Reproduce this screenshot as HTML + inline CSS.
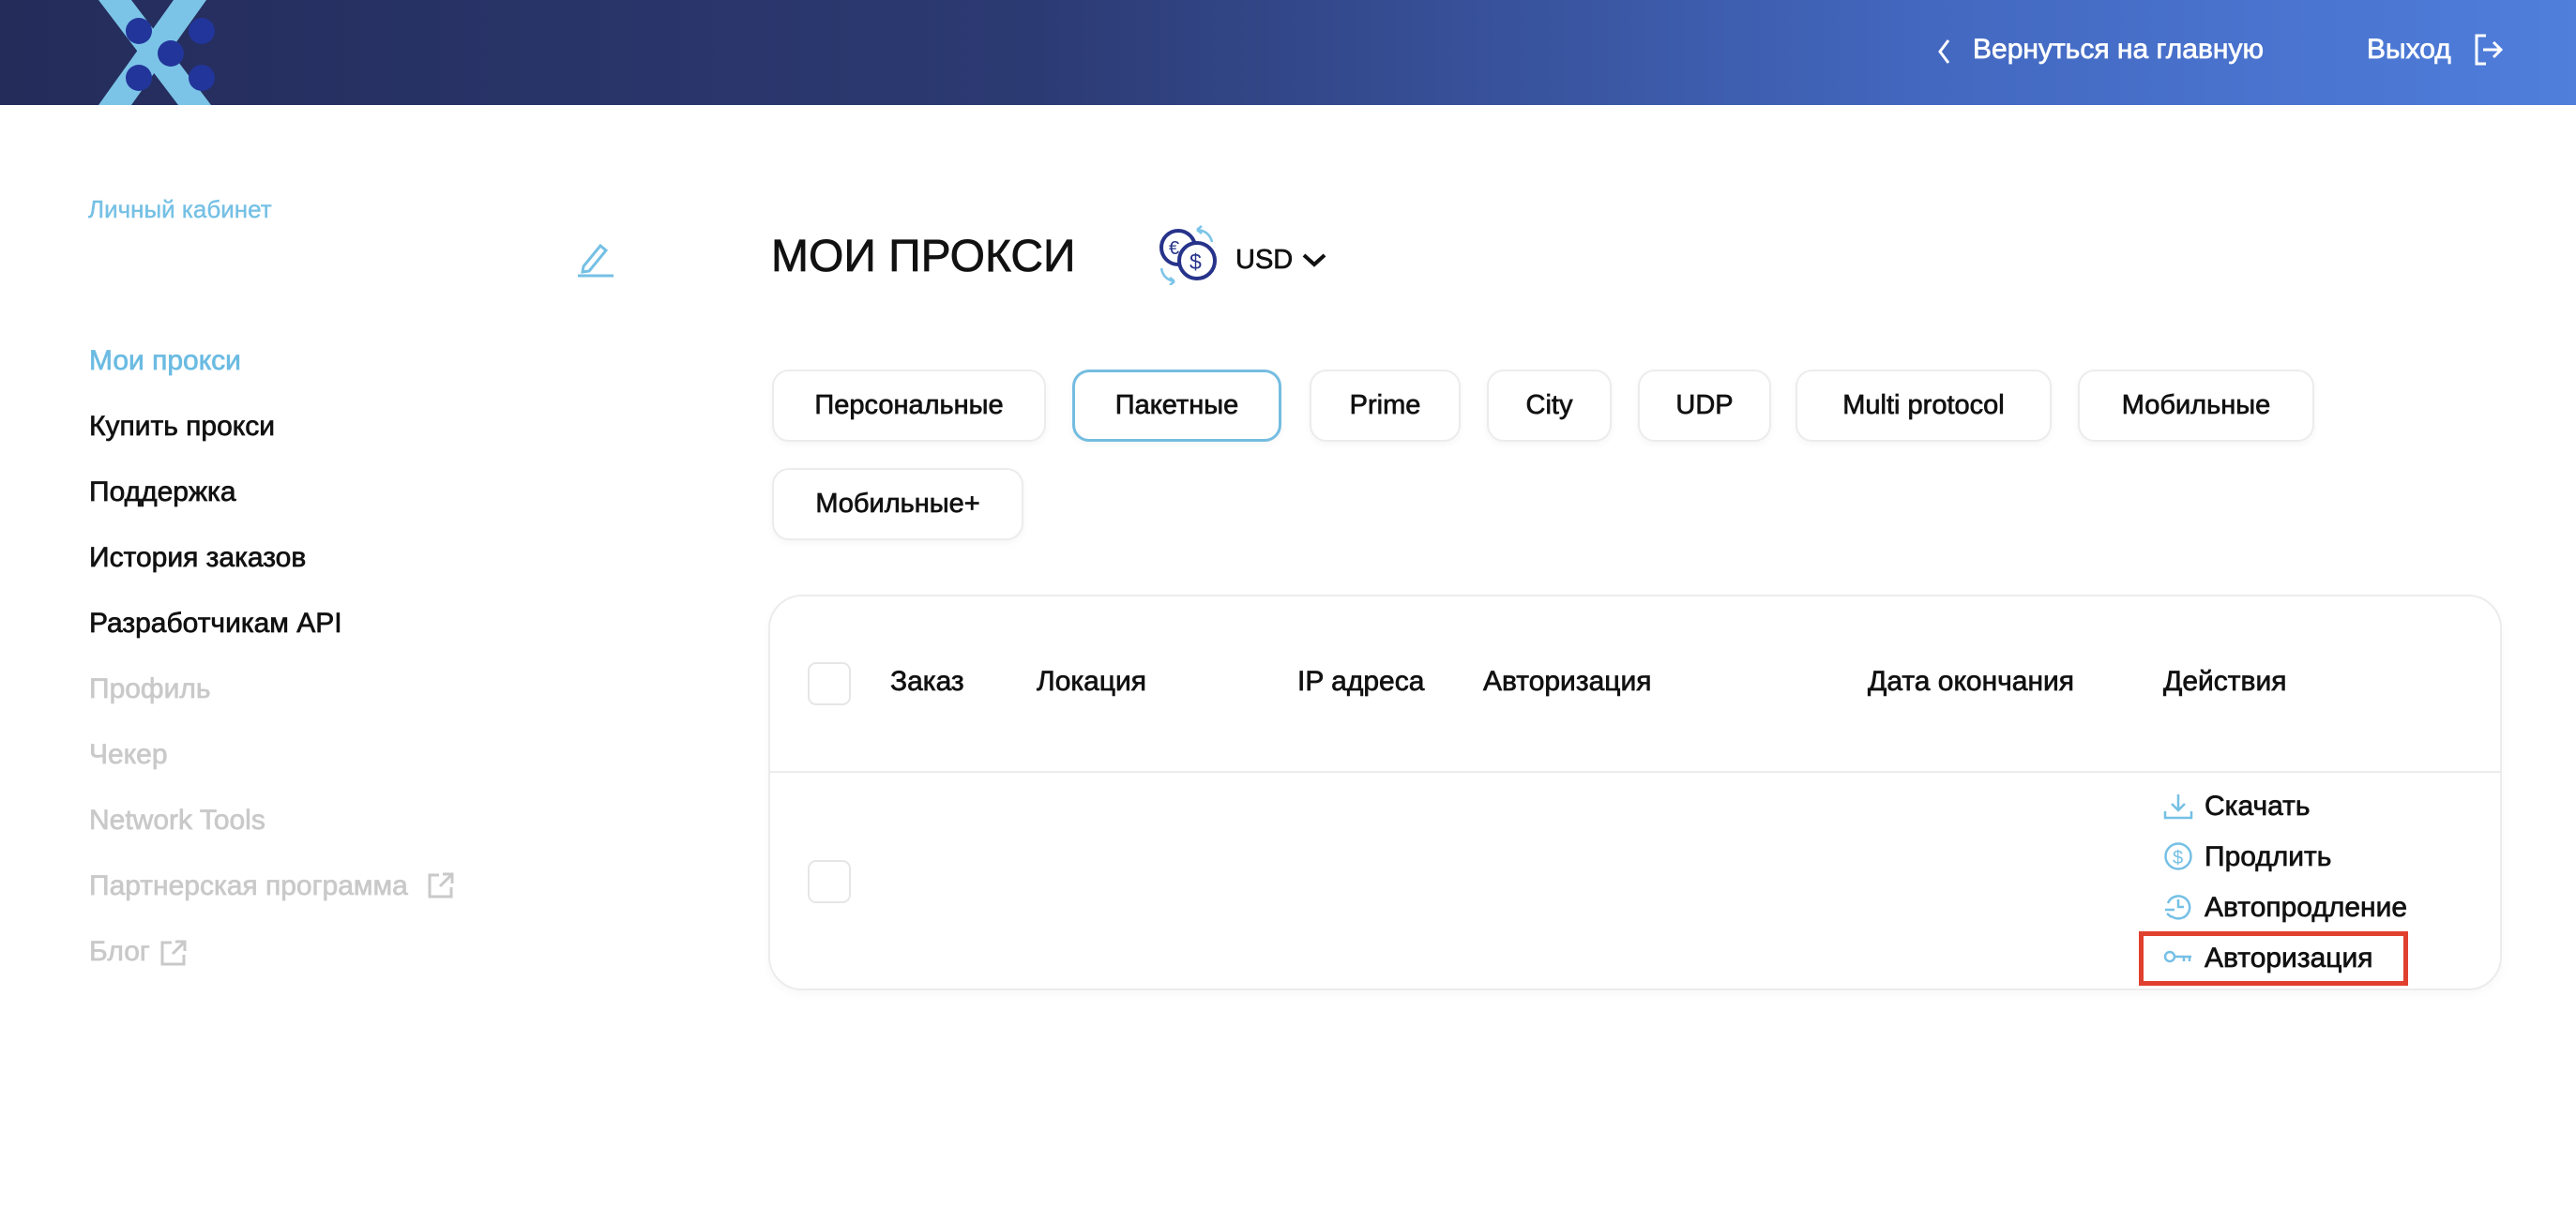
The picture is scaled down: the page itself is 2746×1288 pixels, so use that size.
<!DOCTYPE html>
<html><head><meta charset="utf-8"><style>
*{margin:0;padding:0;box-sizing:border-box}
body{width:2746px;height:1288px;background:#fff;position:relative;overflow:hidden;font-family:"Liberation Sans","DejaVu Sans",sans-serif;color:#111}
.a{position:absolute;white-space:nowrap}
.s{-webkit-text-stroke:0.7px currentColor}
.hdr{position:absolute;left:0;top:0;width:2746px;height:112px;background:linear-gradient(90deg,#242c5a 0%,#2c3a73 40%,#4368c0 75%,#4f7edb 100%)}
.menu{font-size:30px;left:95px;-webkit-text-stroke:0.7px currentColor}
.tab{position:absolute;height:77px;border:2px solid #ececec;border-radius:18px;background:#fff;font-size:29px;display:flex;align-items:center;justify-content:center;box-shadow:0 3px 8px rgba(0,0,0,0.04);-webkit-text-stroke:0.7px currentColor}
.th{font-size:30px;top:710px;-webkit-text-stroke:0.7px currentColor}
.cb{position:absolute;width:46px;height:46px;border:2px solid #e6e6e6;border-radius:9px}
.act{font-size:30px;left:2350px;-webkit-text-stroke:0.7px currentColor}
</style></head><body>
<div class="hdr"></div>
<svg class="a" style="left:95px;top:0" width="140" height="112" viewBox="0 0 140 112">
<path d="M10 0 L45 0 L130 112 L95 112 Z" fill="#7bc4e8"/>
<path d="M125 0 L90 0 L10 112 L45 112 Z" fill="#7bc4e8"/>
<circle cx="53" cy="33" r="14" fill="#22359a"/><circle cx="120" cy="33" r="14" fill="#22359a"/>
<circle cx="87" cy="57" r="14" fill="#22359a"/>
<circle cx="53" cy="83" r="14" fill="#22359a"/><circle cx="120" cy="83" r="14" fill="#22359a"/>
</svg>
<svg class="a" style="left:2063px;top:40px" width="20" height="30" viewBox="0 0 20 30"><path d="M14 3 L5 15 L14 27" fill="none" stroke="#fff" stroke-width="3"/></svg>
<div class="a s" style="left:2103px;top:36px;font-size:30px;color:#fff">Вернуться на главную</div>
<div class="a s" style="left:2523px;top:36px;font-size:30px;color:#fff">Выход</div>
<svg class="a" style="left:2636px;top:36px" width="36" height="34" viewBox="0 0 36 34"><path d="M14 2 H4 V32 H14" fill="none" stroke="#fff" stroke-width="3"/><path d="M11 17 H30 M22 9 L30 17 L22 25" fill="none" stroke="#fff" stroke-width="3"/></svg>

<div class="a s" style="left:94px;top:208px;font-size:26px;color:#75c0e5;-webkit-text-stroke:0.4px #75c0e5">Личный кабинет</div>
<svg class="a" style="left:614px;top:258px" width="40" height="38" viewBox="0 0 40 38"><path d="M8 26 L26 4 L32 9 L14 31 L7 32 Z" fill="none" stroke="#75c0e5" stroke-width="3"/><path d="M2 36 H40" stroke="#75c0e5" stroke-width="3"/></svg>
<div class="a menu" style="top:368px;color:#6bbbe2">Мои прокси</div>
<div class="a menu" style="top:438px">Купить прокси</div>
<div class="a menu" style="top:508px">Поддержка</div>
<div class="a menu" style="top:578px">История заказов</div>
<div class="a menu" style="top:648px">Разработчикам API</div>
<div class="a menu" style="top:718px;color:#c9c9c9">Профиль</div>
<div class="a menu" style="top:788px;color:#c9c9c9">Чекер</div>
<div class="a menu" style="top:858px;color:#c9c9c9">Network Tools</div>
<div class="a menu" style="top:928px;color:#c9c9c9">Партнерская программа</div>
<svg class="a" style="left:455px;top:929px" width="30" height="30" viewBox="0 0 30 30"><path d="M13 4 H3 V27 H26 V17 M17 3 H27 V13 M27 3 L14 16" fill="none" stroke="#c9c9c9" stroke-width="3"/></svg>
<div class="a menu" style="top:998px;color:#c9c9c9">Блог</div>
<svg class="a" style="left:170px;top:1001px" width="30" height="30" viewBox="0 0 30 30"><path d="M13 4 H3 V27 H26 V17 M17 3 H27 V13 M27 3 L14 16" fill="none" stroke="#c9c9c9" stroke-width="3"/></svg>

<div class="a s" style="left:822px;top:246px;font-size:48px;color:#111">МОИ ПРОКСИ</div>
<svg class="a" style="left:1234px;top:240px" width="68" height="64" viewBox="0 0 68 64">
<circle cx="22" cy="24" r="18" fill="none" stroke="#27338a" stroke-width="4"/>
<circle cx="42" cy="38" r="19" fill="#fff" stroke="#27338a" stroke-width="4"/>
<text x="12" y="31" font-size="20" fill="#27338a" font-family="Liberation Sans">€</text>
<text x="34" y="47" font-size="23" fill="#27338a" font-family="Liberation Sans">$</text>
<path d="M42 5 Q55 6 58 18" fill="none" stroke="#7bc4e8" stroke-width="2.5"/><path d="M42 5 L47 1 M42 5 L47 9" stroke="#7bc4e8" stroke-width="2.5"/>
<path d="M4 46 Q6 58 18 60" fill="none" stroke="#7bc4e8" stroke-width="2.5"/><path d="M18 60 L13 56 M18 60 L13 64" stroke="#7bc4e8" stroke-width="2.5"/>
</svg>
<div class="a s" style="left:1317px;top:261px;font-size:29px">USD</div>
<svg class="a" style="left:1387px;top:268px" width="28" height="18" viewBox="0 0 28 18"><path d="M3 4 L14 14 L25 4" fill="none" stroke="#111" stroke-width="4"/></svg>

<div class="tab" style="left:823px;top:394px;width:292px">Персональные</div>
<div class="tab" style="left:1143px;top:394px;width:223px;border:3px solid #74bde0">Пакетные</div>
<div class="tab" style="left:1396px;top:394px;width:161px">Prime</div>
<div class="tab" style="left:1585px;top:394px;width:133px">City</div>
<div class="tab" style="left:1746px;top:394px;width:142px">UDP</div>
<div class="tab" style="left:1914px;top:394px;width:273px">Multi protocol</div>
<div class="tab" style="left:2215px;top:394px;width:252px">Мобильные</div>
<div class="tab" style="left:823px;top:499px;width:268px">Мобильные+</div>

<div class="a" style="left:819px;top:634px;width:1848px;height:422px;border:2px solid #ececec;border-radius:36px;box-shadow:0 4px 10px rgba(0,0,0,0.03)"></div>
<div class="a" style="left:820px;top:822px;width:1846px;height:2px;background:#ececec"></div>
<div class="cb" style="left:861px;top:706px"></div>
<div class="a th" style="left:949px">Заказ</div>
<div class="a th" style="left:1105px">Локация</div>
<div class="a th" style="left:1383px">IP адреса</div>
<div class="a th" style="left:1581px">Авторизация</div>
<div class="a th" style="left:1991px">Дата окончания</div>
<div class="a th" style="left:2306px">Действия</div>
<div class="cb" style="left:861px;top:917px"></div>

<svg class="a" style="left:2306px;top:845px" width="32" height="30" viewBox="0 0 32 30"><path d="M16 2 V19 M9 12 L16 19 L23 12 M2 20 V27 H30 V20" fill="none" stroke="#75c0e5" stroke-width="2.5"/></svg>
<div class="a act" style="top:843px">Скачать</div>
<svg class="a" style="left:2306px;top:897px" width="32" height="32" viewBox="0 0 32 32"><circle cx="16" cy="16" r="13.5" fill="none" stroke="#75c0e5" stroke-width="2.5"/><text x="10" y="24" font-size="20" fill="#75c0e5" font-family="Liberation Sans">$</text></svg>
<div class="a act" style="top:897px">Продлить</div>
<svg class="a" style="left:2306px;top:951px" width="32" height="32" viewBox="0 0 32 32"><path d="M5 12 A12 12 0 1 1 9 26" fill="none" stroke="#75c0e5" stroke-width="2.5"/><path d="M16 8 V16 H22" fill="none" stroke="#75c0e5" stroke-width="2.5"/><path d="M2 19 H12 M4 23 L9 27" stroke="#75c0e5" stroke-width="2.5"/></svg>
<div class="a act" style="top:951px">Автопродление</div>
<svg class="a" style="left:2306px;top:1012px" width="32" height="16" viewBox="0 0 32 16"><circle cx="7" cy="8" r="5" fill="none" stroke="#75c0e5" stroke-width="2.5"/><path d="M12 8 H30 M22 8 V13 M28 8 V13" stroke="#75c0e5" stroke-width="2.5"/></svg>
<div class="a act" style="top:1005px">Авторизация</div>
<div class="a" style="left:2280px;top:993px;width:287px;height:58px;border:5px solid #e0402e"></div>
</body></html>
